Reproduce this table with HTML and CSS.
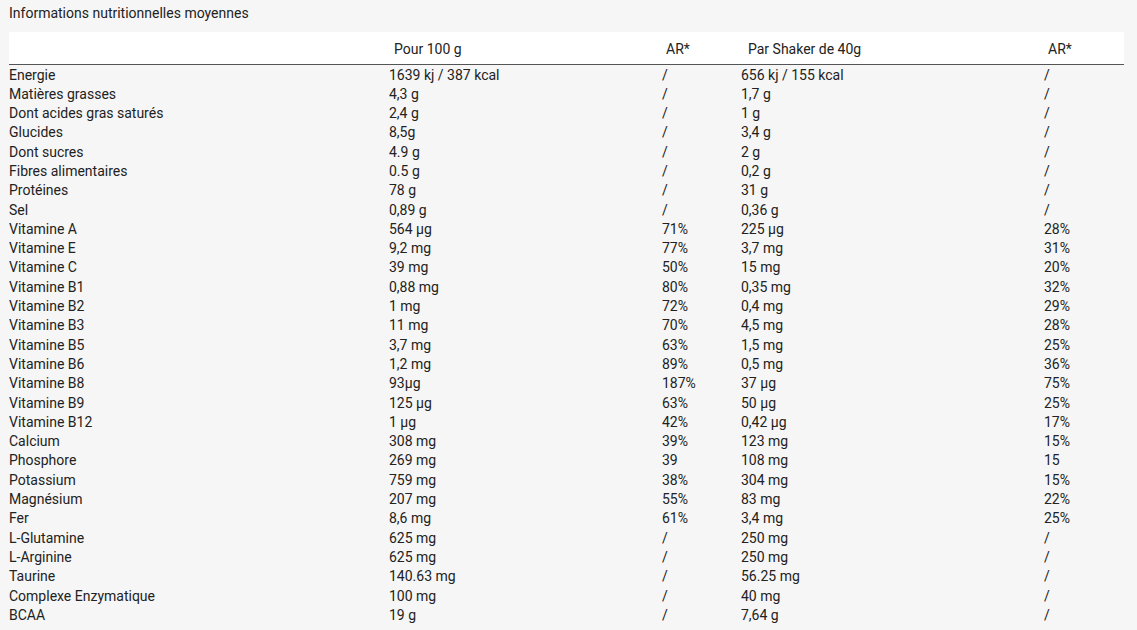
FILE: index.html
```html
<!DOCTYPE html>
<html lang="fr">
<head>
<meta charset="utf-8">
<title>Informations nutritionnelles moyennes</title>
<link rel="stylesheet" href="styles.css">
</head>
<body>
<div class="page">
  <div class="title">Informations nutritionnelles moyennes</div>
  <table class="nutri">
    <colgroup>
      <col class="c-name"><col class="c-100"><col class="c-ar1"><col class="c-shaker"><col class="c-ar2">
    </colgroup>
    <thead>
      <tr>
        <th></th>
        <th class="h-100">Pour 100 g</th>
        <th class="h-ar1">AR*</th>
        <th class="h-shaker">Par Shaker de 40g</th>
        <th class="h-ar2">AR*</th>
      </tr>
    </thead>
    <tbody>
      <tr><td>Energie</td><td>1639 kj / 387 kcal</td><td>/</td><td>656 kj / 155 kcal</td><td>/</td></tr>
      <tr><td>Matières grasses</td><td>4,3 g</td><td>/</td><td>1,7 g</td><td>/</td></tr>
      <tr><td>Dont acides gras saturés</td><td>2,4 g</td><td>/</td><td>1 g</td><td>/</td></tr>
      <tr><td>Glucides</td><td>8,5g</td><td>/</td><td>3,4 g</td><td>/</td></tr>
      <tr><td>Dont sucres</td><td>4.9 g</td><td>/</td><td>2 g</td><td>/</td></tr>
      <tr><td>Fibres alimentaires</td><td>0.5 g</td><td>/</td><td>0,2 g</td><td>/</td></tr>
      <tr><td>Protéines</td><td>78 g</td><td>/</td><td>31 g</td><td>/</td></tr>
      <tr><td>Sel</td><td>0,89 g</td><td>/</td><td>0,36 g</td><td>/</td></tr>
      <tr><td>Vitamine A</td><td>564 µg</td><td>71%</td><td>225 µg</td><td>28%</td></tr>
      <tr><td>Vitamine E</td><td>9,2 mg</td><td>77%</td><td>3,7 mg</td><td>31%</td></tr>
      <tr><td>Vitamine C</td><td>39 mg</td><td>50%</td><td>15 mg</td><td>20%</td></tr>
      <tr><td>Vitamine B1</td><td>0,88 mg</td><td>80%</td><td>0,35 mg</td><td>32%</td></tr>
      <tr><td>Vitamine B2</td><td>1 mg</td><td>72%</td><td>0,4 mg</td><td>29%</td></tr>
      <tr><td>Vitamine B3</td><td>11 mg</td><td>70%</td><td>4,5 mg</td><td>28%</td></tr>
      <tr><td>Vitamine B5</td><td>3,7 mg</td><td>63%</td><td>1,5 mg</td><td>25%</td></tr>
      <tr><td>Vitamine B6</td><td>1,2 mg</td><td>89%</td><td>0,5 mg</td><td>36%</td></tr>
      <tr><td>Vitamine B8</td><td>93µg</td><td>187%</td><td>37 µg</td><td>75%</td></tr>
      <tr><td>Vitamine B9</td><td>125 µg</td><td>63%</td><td>50 µg</td><td>25%</td></tr>
      <tr><td>Vitamine B12</td><td>1 µg</td><td>42%</td><td>0,42 µg</td><td>17%</td></tr>
      <tr><td>Calcium</td><td>308 mg</td><td>39%</td><td>123 mg</td><td>15%</td></tr>
      <tr><td>Phosphore</td><td>269 mg</td><td>39</td><td>108 mg</td><td>15</td></tr>
      <tr><td>Potassium</td><td>759 mg</td><td>38%</td><td>304 mg</td><td>15%</td></tr>
      <tr><td>Magnésium</td><td>207 mg</td><td>55%</td><td>83 mg</td><td>22%</td></tr>
      <tr><td>Fer</td><td>8,6 mg</td><td>61%</td><td>3,4 mg</td><td>25%</td></tr>
      <tr><td>L-Glutamine</td><td>625 mg</td><td>/</td><td>250 mg</td><td>/</td></tr>
      <tr><td>L-Arginine</td><td>625 mg</td><td>/</td><td>250 mg</td><td>/</td></tr>
      <tr><td>Taurine</td><td>140.63 mg</td><td>/</td><td>56.25 mg</td><td>/</td></tr>
      <tr><td>Complexe Enzymatique</td><td>100 mg</td><td>/</td><td>40 mg</td><td>/</td></tr>
      <tr><td>BCAA</td><td>19 g</td><td>/</td><td>7,64 g</td><td>/</td></tr>
    </tbody>
  </table>
</div>
</body>
</html>
```
FILE: styles.css
```css
html, body {
  margin: 0;
  padding: 0;
  background: #f6f6f6;
}
body {
  font-family: Roboto, "Liberation Sans", Arial, sans-serif;
  font-size: 14px;
  color: #222;
}
.page {
  padding: 5px 13px 0 9px;
}
.title {
  line-height: 16px;
  margin-bottom: 11px;
}
.nutri {
  width: 1115px;
  table-layout: fixed;
  border-collapse: collapse;
  border-spacing: 0;
}
.c-name { width: 380px; }
.c-100 { width: 273px; }
.c-ar1 { width: 79px; }
.c-shaker { width: 303px; }
.c-ar2 { width: 80px; }

.nutri thead tr {
  background: #fff;
  border-bottom: 1px solid #555;
}
.nutri th {
  box-sizing: border-box;
  height: 32px;
  padding: 2px 0 0;
  font-weight: 400;
  text-align: left;
  vertical-align: middle;
  white-space: nowrap;
}
.nutri .h-100 { padding-left: 5px; }
.nutri .h-ar1 { padding-left: 4px; }
.nutri .h-shaker { padding-left: 7px; }
.nutri .h-ar2 { padding-left: 4px; }

.nutri td {
  padding: 2px 0 0;
  line-height: 17.29px;
  text-align: left;
  vertical-align: top;
  white-space: nowrap;
}
```
